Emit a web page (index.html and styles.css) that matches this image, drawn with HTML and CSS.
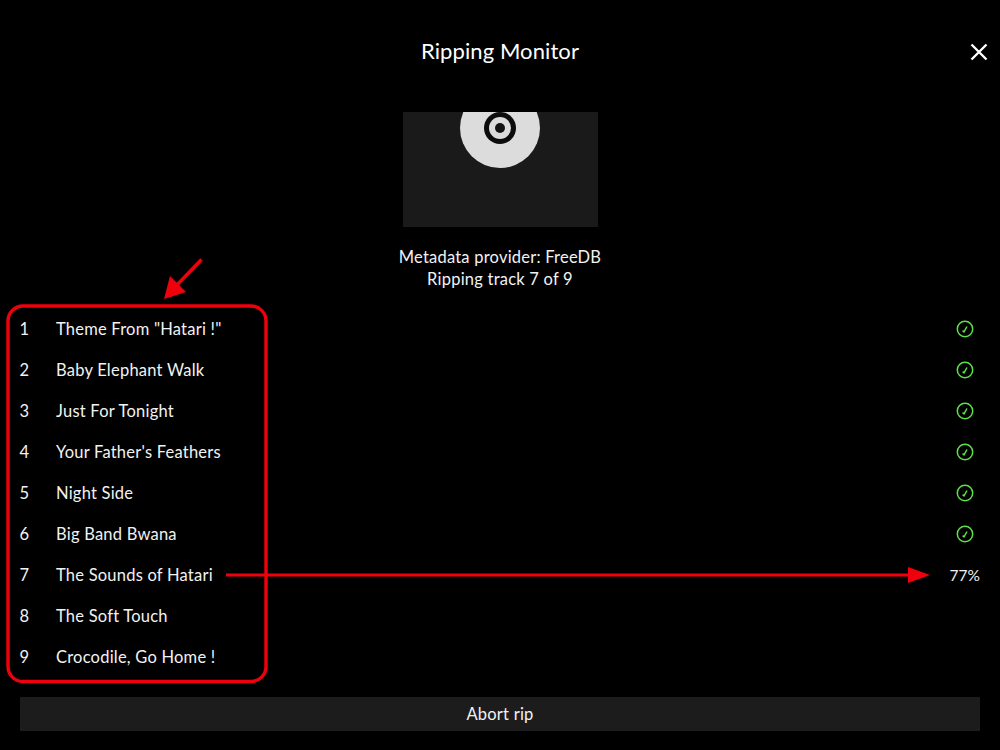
FILE: index.html
```html
<!DOCTYPE html>
<html lang="en">
<head>
<meta charset="utf-8">
<title>Ripping Monitor</title>
<link rel="stylesheet" href="styles.css">
</head>
<body>
<main class="app">
  <header class="header">
    <h1 class="title">Ripping Monitor</h1>
    <button class="close" aria-label="Close">
      <svg width="18" height="18" viewBox="0 0 18 18"><path d="M1.5 1.5 16.5 16.5M16.5 1.5 1.5 16.5" stroke="#fff" stroke-width="2.4" fill="none"/></svg>
    </button>
  </header>
  <div class="cover">
    <svg width="195" height="115" viewBox="0 0 195 115">
      <circle cx="97" cy="16" r="40" fill="#dcdcdc"/>
      <circle cx="97" cy="16" r="16" fill="#0c0c0c"/>
      <circle cx="97" cy="16" r="11" fill="#dcdcdc"/>
      <circle cx="97" cy="16" r="5" fill="#141414"/>
    </svg>
  </div>
  <div class="meta">
    <p>Metadata provider: FreeDB</p>
    <p>Ripping track 7 of 9</p>
  </div>
  <ol class="tracks">
    <li class="track"><span class="num">1</span><span class="name">Theme From "Hatari !"</span><svg class="check" width="18" height="18" viewBox="0 0 18 18"><circle cx="9" cy="9" r="7.7"/><path d="M6.6 10.6 8 11.8 11 6.5"/></svg></li>
    <li class="track"><span class="num">2</span><span class="name">Baby Elephant Walk</span><svg class="check" width="18" height="18" viewBox="0 0 18 18"><circle cx="9" cy="9" r="7.7"/><path d="M6.6 10.6 8 11.8 11 6.5"/></svg></li>
    <li class="track"><span class="num">3</span><span class="name">Just For Tonight</span><svg class="check" width="18" height="18" viewBox="0 0 18 18"><circle cx="9" cy="9" r="7.7"/><path d="M6.6 10.6 8 11.8 11 6.5"/></svg></li>
    <li class="track"><span class="num">4</span><span class="name">Your Father's Feathers</span><svg class="check" width="18" height="18" viewBox="0 0 18 18"><circle cx="9" cy="9" r="7.7"/><path d="M6.6 10.6 8 11.8 11 6.5"/></svg></li>
    <li class="track"><span class="num">5</span><span class="name">Night Side</span><svg class="check" width="18" height="18" viewBox="0 0 18 18"><circle cx="9" cy="9" r="7.7"/><path d="M6.6 10.6 8 11.8 11 6.5"/></svg></li>
    <li class="track"><span class="num">6</span><span class="name">Big Band Bwana</span><svg class="check" width="18" height="18" viewBox="0 0 18 18"><circle cx="9" cy="9" r="7.7"/><path d="M6.6 10.6 8 11.8 11 6.5"/></svg></li>
    <li class="track"><span class="num">7</span><span class="name">The Sounds of Hatari</span><span class="pct">77%</span></li>
    <li class="track"><span class="num">8</span><span class="name">The Soft Touch</span></li>
    <li class="track"><span class="num">9</span><span class="name">Crocodile, Go Home !</span></li>
  </ol>
  <button class="abort">Abort rip</button>
  <svg class="annotations" width="1000" height="750" viewBox="0 0 1000 750">
    <rect x="8" y="306" width="258" height="375.5" rx="15" fill="none" stroke="#f0000c" stroke-width="3.4"/>
    <path d="M201.500 259.500 176 286" stroke="#f0000c" stroke-width="3.4" fill="none"/>
    <path d="M164 299 170 276 186 292Z" fill="#f0000c"/>
    <path d="M226 575H910" stroke="#f0000c" stroke-width="3" fill="none"/>
    <path d="M908 567 930 575 908 583Z" fill="#f0000c"/>
  </svg>
</main>
</body>
</html>
```
FILE: styles.css
```css
* { box-sizing: border-box; }
html, body { margin: 0; background: #000; }
body { font-family: Lato, "Liberation Sans", sans-serif; color: #fff; }
.app { position: relative; width: 1000px; height: 750px; display: flex; flex-direction: column; overflow: hidden; }
.header { position: relative; height: 112px; display: flex; justify-content: center; padding-top: 38px; }
.title { margin: 0; font-size: 22px; line-height: 26px; font-weight: 400; letter-spacing: .1px; }
.close { position: absolute; top: 43px; right: 12px; padding: 0; width: 18px; height: 18px; border: 0; background: none; display: flex; }
.cover { align-self: center; width: 195px; height: 115px; background: #1a1a1a; display: flex; }
.meta { margin-top: 19px; text-align: center; font-size: 16.500px; line-height: 22px; letter-spacing: .22px; color: #f2f2f2; }
.meta p { margin: 0; }
.tracks { list-style: none; margin: 18px 0 0; padding: 0 20px 0 19.500px; }
.track { height: 41px; display: flex; align-items: center; font-size: 16.500px; letter-spacing: .22px; color: #f2f2f2; }
.num { width: 36.500px; }
.name { flex: 1; }
.check { fill: none; stroke: #5ee04a; stroke-width: 1.500; margin-right: 6px; }
.pct { font-size: 15.500px; letter-spacing: 0; }
.abort { margin: 20px 20px 0; height: 34px; border: 0; padding: 0 0 1px; background: #1c1c1c; color: #f2f2f2; font: inherit; font-size: 16.500px; letter-spacing: .22px; }
.annotations { position: absolute; inset: 0; pointer-events: none; }
```
